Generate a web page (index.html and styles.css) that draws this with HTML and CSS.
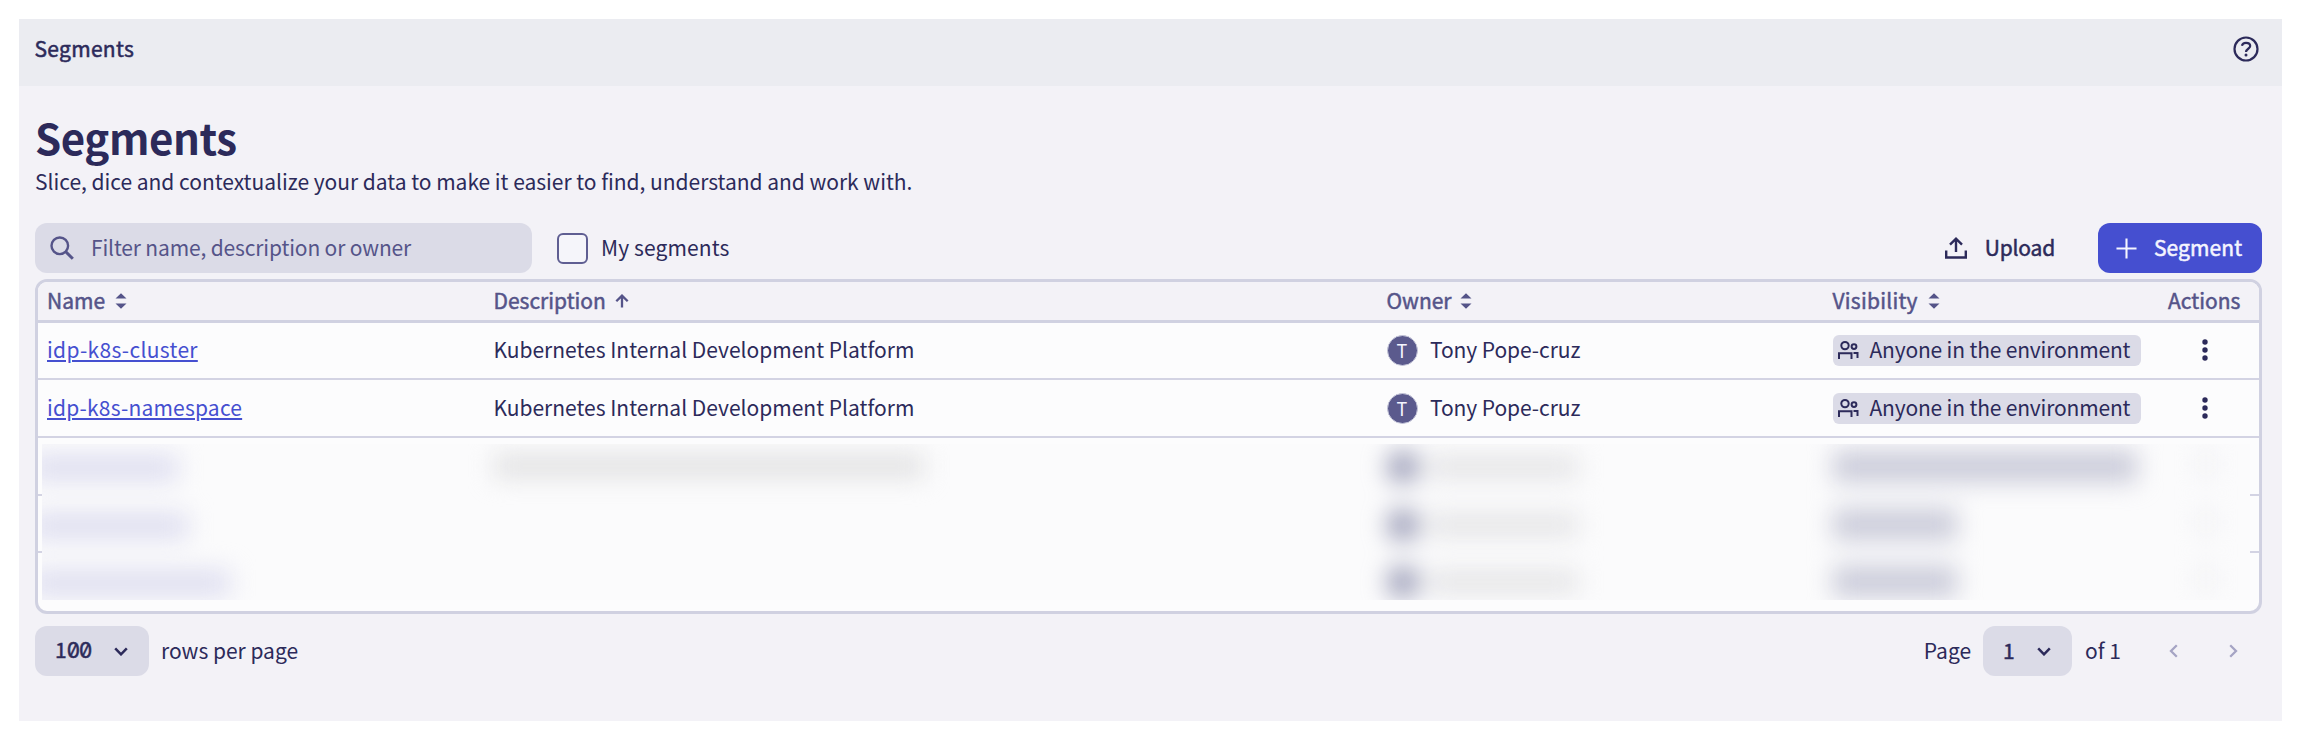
FILE: index.html
```html
<!DOCTYPE html>
<html lang="en">
<head>
<meta charset="utf-8">
<title>Segments</title>
<link rel="stylesheet" href="styles.css">
</head>
<body>
<svg width="0" height="0" class="defs" aria-hidden="true">
  <symbol id="sort" viewBox="0 0 12 16"><path d="M0.5 5.6 6 0.2l5.5 5.4zM0.5 10.4 6 15.8l5.5-5.4z" fill="currentColor"/></symbol>
  <symbol id="people" viewBox="0 0 22 20"><g fill="none" stroke="currentColor" stroke-width="2"><circle cx="8" cy="5.6" r="3.7"/><circle cx="17" cy="6.6" r="2.4"/><path d="M2 19v-5.800h12.500V19M16.500 13h4v5"/></g></symbol>
  <symbol id="dots" viewBox="0 0 6 22"><g fill="currentColor"><circle cx="3" cy="3" r="2.700"/><circle cx="3" cy="11" r="2.700"/><circle cx="3" cy="19" r="2.700"/></g></symbol>
  <symbol id="chevron" viewBox="0 0 14 9"><path d="m1.200 1.300 5.800 6 5.800-6" fill="none" stroke="currentColor" stroke-width="2.500"/></symbol>
</svg>
<div class="app">
  <header class="topbar">
    <span class="crumb">Segments</span>
    <svg class="help" viewBox="0 0 26 26" fill="none" stroke="currentColor" stroke-width="2.200"><circle cx="13" cy="13" r="11.500"/><path d="M8.900 9.800C9.300 7.900 10.900 6.800 13 6.800c2.400 0 4.200 1.300 4.200 3.300 0 2.500-4.200 2.900-4.200 5.900"/><circle cx="13" cy="19" r="1.500" fill="currentColor" stroke="none"/></svg>
  </header>
  <main class="main">
    <h1 class="title">Segments</h1>
    <p class="subtitle">Slice, dice and contextualize your data to make it easier to find, understand and work with.</p>
    <div class="toolbar">
      <div class="search">
        <svg class="search-icon" viewBox="0 0 24 24" fill="none" stroke="currentColor" stroke-width="2.400"><circle cx="9.800" cy="9.800" r="8.300"/><path d="m15.800 15.800 7 7" stroke-width="3"/></svg>
        <span class="text placeholder">Filter name, description or owner</span>
      </div>
      <label class="check"><span class="box"></span><span class="text check-label">My segments</span></label>
      <div class="upload">
        <svg class="upload-icon" viewBox="0 0 24 24" fill="none" stroke="currentColor" stroke-width="2.400"><path d="M2.200 14.500v7h19.600v-7M12 16V3M6 8.700 12 2.700l6 6"/></svg>
        <span class="text upload-label">Upload</span>
      </div>
      <div class="create">
        <svg class="plus" viewBox="0 0 22 22" fill="none" stroke="currentColor" stroke-width="2.200"><path d="M11 .5v21M.5 11h21"/></svg>
        <span class="text create-label">Segment</span>
      </div>
    </div>
    <section class="table">
      <div class="row head">
        <div class="cell"><span class="text h-name">Name</span><svg class="sort"><use href="#sort"/></svg></div>
        <div class="cell"><span class="text h-desc">Description</span><svg class="asc" viewBox="0 0 14 14" fill="none" stroke="currentColor" stroke-width="2.300"><path d="M7 13.500V2M1.300 7.300 7 1.600l5.700 5.700"/></svg></div>
        <div class="cell"><span class="text h-owner">Owner</span><svg class="sort near"><use href="#sort"/></svg></div>
        <div class="cell"><span class="text h-vis">Visibility</span><svg class="sort"><use href="#sort"/></svg></div>
        <div class="cell"><span class="text h-act">Actions</span></div>
      </div>
      <div class="row">
        <div class="cell"><a class="text link cluster">idp-k8s-cluster</a></div>
        <div class="cell"><span class="text">Kubernetes Internal Development Platform</span></div>
        <div class="cell"><span class="avatar">T</span><span class="text owner">Tony Pope-cruz</span></div>
        <div class="cell"><span class="chip"><svg class="people"><use href="#people"/></svg><span class="text chip-label">Anyone in the environment</span></span></div>
        <div class="cell menu"><svg class="dots"><use href="#dots"/></svg></div>
      </div>
      <div class="row">
        <div class="cell"><a class="text link">idp-k8s-namespace</a></div>
        <div class="cell"><span class="text">Kubernetes Internal Development Platform</span></div>
        <div class="cell"><span class="avatar">T</span><span class="text owner">Tony Pope-cruz</span></div>
        <div class="cell"><span class="chip"><svg class="people"><use href="#people"/></svg><span class="text chip-label">Anyone in the environment</span></span></div>
        <div class="cell menu"><svg class="dots"><use href="#dots"/></svg></div>
      </div>
      <div class="row"></div>
      <div class="row"></div>
      <div class="row last"></div>
      <div class="redacted">
        <div class="veil">
          <div class="vrow"><div><i class="vname n1"></i></div><div><i class="vdesc"></i></div><div class="vowner"><i class="vdot"></i><i class="vtext"></i></div><div><i class="vchip wide"></i></div><div><i class="vmenu"></i></div></div>
          <div class="vrow"><div><i class="vname n2"></i></div><div></div><div class="vowner"><i class="vdot"></i><i class="vtext"></i></div><div><i class="vchip"></i></div><div><i class="vmenu"></i></div></div>
          <div class="vrow"><div><i class="vname n3"></i></div><div></div><div class="vowner"><i class="vdot"></i><i class="vtext"></i></div><div><i class="vchip"></i></div><div><i class="vmenu"></i></div></div>
        </div>
      </div>
    </section>
    <footer class="pager">
      <div class="select rows"><span class="text num">1<span class="zeros">00</span></span><svg class="chev"><use href="#chevron"/></svg></div>
      <span class="text rows-label">rows per page</span>
      <span class="text page-label">Page</span>
      <div class="select page"><span class="text num">1</span><svg class="chev"><use href="#chevron"/></svg></div>
      <span class="text of">of 1</span>
      <svg class="arrow prev" viewBox="0 0 9 14"><path d="M7.800 1.200 2 7l5.800 5.800" fill="none" stroke="currentColor" stroke-width="2.300"/></svg>
      <svg class="arrow" viewBox="0 0 9 14"><path d="M1.200 1.200 7 7l-5.800 5.800" fill="none" stroke="currentColor" stroke-width="2.300"/></svg>
    </footer>
  </main>
</div>
</body>
</html>
```

FILE: styles.css
```css
* { box-sizing: border-box; }
body {
  margin: 0;
  background: #fff;
  color: #2c2a5a;
  font-family: "Noto Sans CJK JP", "Noto Sans", sans-serif;
  font-size: 21px;
  line-height: 30px;
  white-space: nowrap;
}
svg { display: block; flex: none; }
.defs { position: absolute; }
.app { margin: 19px 22px 0 19px; height: 702px; background: #f3f2f7; }
.topbar {
  height: 67px;
  padding: 0 23px 8px 15.500px;
  display: flex;
  align-items: center;
  justify-content: space-between;
  background: #ebecf1;
}
.text { padding-bottom: 2px; }
.crumb, .h-name, .h-desc, .h-owner, .h-vis, .h-act, .upload-label, .create-label, .num { -webkit-text-stroke: 0.5px currentColor; }
.crumb { letter-spacing: 0.3px; padding-bottom: 2px; }
.help { width: 26px; height: 26px; }
.main { padding: 26px 20px 0 16px; }
.title { margin: 0; font-size: 42px; line-height: 50px; font-weight: 700; letter-spacing: -0.400px; }
.subtitle { margin: 4px 0 0; letter-spacing: -0.020px; }
.toolbar { margin-top: 27px; height: 50px; display: flex; align-items: center; }
.search {
  width: 497px;
  height: 50px;
  padding-left: 15px;
  display: flex;
  align-items: center;
  gap: 17px;
  border-radius: 12px;
  background: #dbdbe7;
  color: #555489;
}
.search-icon { width: 24px; height: 24px; }
.placeholder { letter-spacing: -0.150px; }
.check { display: flex; align-items: center; margin-left: 25px; gap: 13px; }
.check-label { letter-spacing: 0.120px; }
.box { width: 31px; height: 31px; border: 2px solid #5f5e92; border-radius: 6px; background: #f5f5fa; }
.upload { margin-left: auto; margin-right: 43px; display: flex; align-items: center; gap: 17px; }
.upload-label { letter-spacing: -0.200px; }
.upload-icon { width: 24px; height: 24px; }
.create {
  width: 164px;
  height: 50px;
  padding-left: 18px;
  display: flex;
  align-items: center;
  gap: 17px;
  border-radius: 12px;
  background: #454fd0;
  color: #f5f5ff;
}
.create-label { letter-spacing: 0.100px; }
.plus { width: 21px; height: 21px; }
.table {
  position: relative;
  margin-top: 6px;
  height: 335px;
  border: 3px solid #d0d1e1;
  border-radius: 12px;
  background: #fcfcfd;
  overflow: hidden;
}
.row {
  display: grid;
  grid-template-columns: 446.500px 893px 446px 335.500px 1fr;
  height: 57.700px;
  border-bottom: 2px solid #d3d3e3;
}
.row.last { border-bottom: 0; }
.row.head { height: 40.500px; background: #f3f2f7; color: #555489; border-bottom: 3px solid #d0d1e1; }
.cell { display: flex; align-items: center; padding-left: 9px; }
.sort { width: 12px; height: 16px; margin-left: 10px; }
.sort.near { margin-left: 8px; }
.h-vis { letter-spacing: 0.250px; }
.asc { width: 14px; height: 14px; margin-left: 9px; }
.link { color: #454fd0; letter-spacing: 0.200px; text-decoration: underline; text-decoration-thickness: 1.500px; text-underline-offset: 2px; }
.cluster { letter-spacing: 0.320px; }
.avatar {
  width: 31px;
  height: 31px;
  border-radius: 50%;
  border: 1px solid #c6c7da;
  background: #5b5a8d;
  color: #f5f5ff;
  font-size: 18px;
  line-height: 28px;
  text-align: center;
}
.owner { margin-left: 12.500px; letter-spacing: -0.080px; }
.chip { display: flex; align-items: center; width: 308px; height: 31px; padding-left: 4px; border-radius: 6px; background: #dbdbe7; }
.people { width: 22px; height: 20px; }
.chip-label { margin-left: 11px; letter-spacing: -0.170px; }
.menu { padding-left: 42.500px; }
.dots { width: 6px; height: 22px; }
.redacted { position: absolute; left: 4px; top: 162px; right: 9px; height: 156px; overflow: hidden; background: #fbfbfc; }
.veil { filter: blur(12px); height: 200px; }
.vrow { display: grid; grid-template-columns: 452px 893px 446px 335px 1fr; height: 57.700px; padding-top: 7px; }
.vrow i { display: block; }
.vname { height: 26px; background: #deDEf0; margin: 4px 0 0 -12px; }
.n1 { width: 148px; }
.n2 { width: 158px; }
.n3 { width: 200px; }
.vdesc { width: 430px; height: 24px; margin-top: 3px; background: #e2e2e3; }
.vowner { display: flex; align-items: center; height: 32px; }
.vdot { width: 32px; height: 32px; border-radius: 50%; background: #9a9cb6; }
.vtext { width: 150px; height: 24px; margin-left: 9px; background: #e5e5e7; }
.vchip { width: 124px; height: 31px; background: #cacbd9; }
.vchip.wide { width: 304px; }
.vmenu { width: 12px; height: 26px; margin-left: 32px; background: #eeeef1; }
.pager { margin-top: 12px; height: 50px; display: flex; align-items: center; }
.select { height: 50px; display: flex; align-items: center; justify-content: space-between; padding: 0 21px 0 20px; border-radius: 12px; background: #dbdbe7; }
.rows { width: 114px; }
.page { width: 89px; margin-left: 12px; }
.zeros { font-family: Inter, sans-serif; font-feature-settings: "zero"; letter-spacing: -0.800px; }
.chev { width: 14px; height: 9px; }
.rows-label { margin-left: 12px; }
.page-label { margin-left: auto; }
.of { margin-left: 13px; margin-right: 48px; }
.arrow { width: 9px; height: 14px; margin-right: 24px; color: #a5a4c4; }
.prev { margin-right: 51px; }
```
